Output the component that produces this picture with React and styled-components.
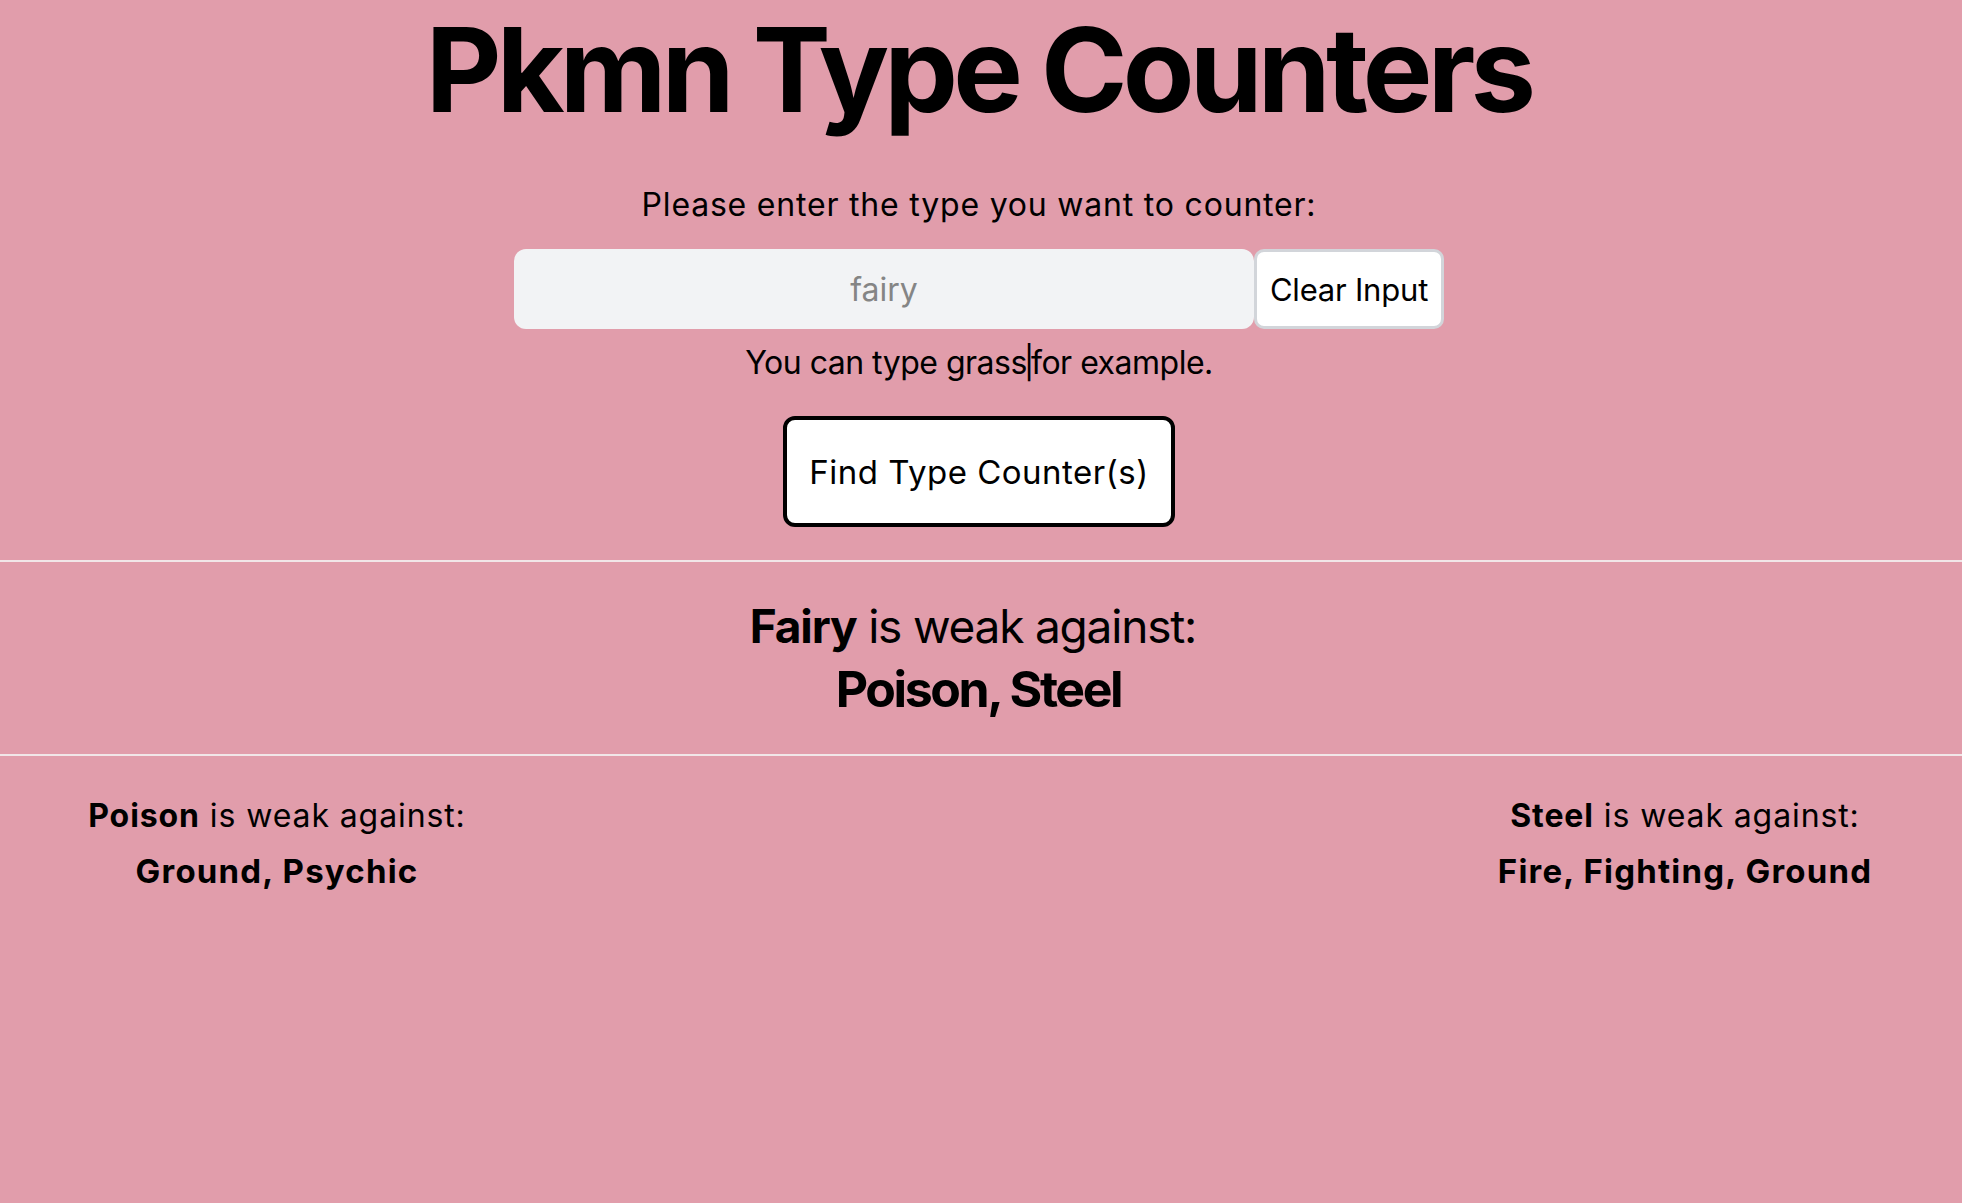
import styled, { createGlobalStyle } from 'styled-components';
import { useState } from 'react';

const GlobalStyle = createGlobalStyle`
  html, body {
    margin: 0;
    padding: 0;
    background: #e19dab;
  }
  body {
    font-family: Inter, "Noto Sans", "Liberation Sans", sans-serif;
    color: #000;
  }
`;

const Page = styled.div`
  display: flex;
  flex-direction: column;
  align-items: center;
  min-height: 100vh;
`;

const Title = styled.h1`
  margin: 0 5px 0 0;
  font-size: 117px;
  line-height: 140px;
  font-weight: 700;
  letter-spacing: -4.8px;
`;

const Prompt = styled.p`
  margin: ${(p) => p.$margin || '0'};
  font-size: 32px;
  line-height: 40px;
  letter-spacing: ${(p) => p.$track || 0}px;
`;

const Bar = styled.span`
  margin: 0 -3px;
`;

const InputRow = styled.div`
  display: flex;
  margin: 24px 4px 0 0;
`;

const TypeInput = styled.input`
  box-sizing: border-box;
  width: 740px;
  height: 80px;
  border: none;
  border-radius: 12px;
  background: #f2f3f5;
  font-family: inherit;
  font-size: 32px;
  text-align: center;
  outline: none;

  &::placeholder {
    color: #858585;
  }
`;

const ClearButton = styled.button`
  box-sizing: border-box;
  width: 190px;
  height: 80px;
  border: 3px solid #d2d5da;
  border-radius: 10px;
  background: #fff;
  font-family: inherit;
  font-size: 31px;
  letter-spacing: -0.2px;
  color: #000;
  padding: 0;
`;

const FindButton = styled.button`
  box-sizing: border-box;
  width: 392px;
  height: 111px;
  margin: 33px 4px 0 0;
  border: 4px solid #000;
  border-radius: 12px;
  background: #fff;
  font-family: inherit;
  font-size: 33px;
  letter-spacing: 0.5px;
  color: #000;
  padding: 0;
`;

const Divider = styled.hr`
  align-self: stretch;
  margin: ${(p) => p.$margin};
  border: none;
  height: 2px;
  background: #f1e6e8;
`;

const Heading = styled.div`
  font-size: ${(p) => p.$size}px;
  line-height: ${(p) => p.$line}px;
  font-weight: ${(p) => (p.$bold ? 700 : 400)};
  letter-spacing: ${(p) => p.$track || 0}px;
  text-align: center;
  margin-top: ${(p) => p.$top || 0}px;
  padding-right: ${(p) => p.$shift || 0}px;
`;

const Columns = styled.div`
  align-self: stretch;
  display: flex;
  justify-content: space-between;
`;

const Column = styled.div`
  width: 554px;
  text-align: center;
`;

const typeChart = {
  fairy: ['Poison', 'Steel'],
  poison: ['Ground', 'Psychic'],
  steel: ['Fire', 'Fighting', 'Ground'],
};

const App = () => {
  const [typeInput, setTypeInput] = useState('');
  const weaknesses = typeChart.fairy;

  return (
    <Page>
      <GlobalStyle />
      <Title>Pkmn Type Counters</Title>
      <Prompt $margin="45px 4px 0 0" $track={0.8}>
        Please enter the type you want to counter:
      </Prompt>
      <InputRow>
        <TypeInput
          placeholder="fairy"
          value={typeInput}
          onChange={(e) => setTypeInput(e.target.value)}
        />
        <ClearButton onClick={() => setTypeInput('')}>Clear Input</ClearButton>
      </InputRow>
      <Prompt $margin="14px 4px 0 0" $track={-0.5}>
        You can type grass<Bar>|</Bar>for example.
      </Prompt>
      <FindButton>Find Type Counter(s)</FindButton>

      <Divider $margin="33px 0 0" />
      <Heading $size={46} $line={56} $top={36} $track={-1.2} $shift={16}>
        <b>Fairy</b> is weak against:
      </Heading>
      <Heading $size={50} $line={60} $top={5} $track={-2.4} $shift={5} $bold>
        {weaknesses.join(', ')}
      </Heading>
      <Divider $margin="35px 0 0" />

      <Columns>
        {weaknesses.map((type) => (
          <Column key={type}>
            <Heading $size={32} $line={40} $top={40} $track={0.9}>
              <b>{type}</b> is weak against:
            </Heading>
            <Heading $size={33} $line={40} $top={15} $track={1.2} $bold>
              {typeChart[type.toLowerCase()].join(', ')}
            </Heading>
          </Column>
        ))}
      </Columns>
    </Page>
  );
};

export default App;
